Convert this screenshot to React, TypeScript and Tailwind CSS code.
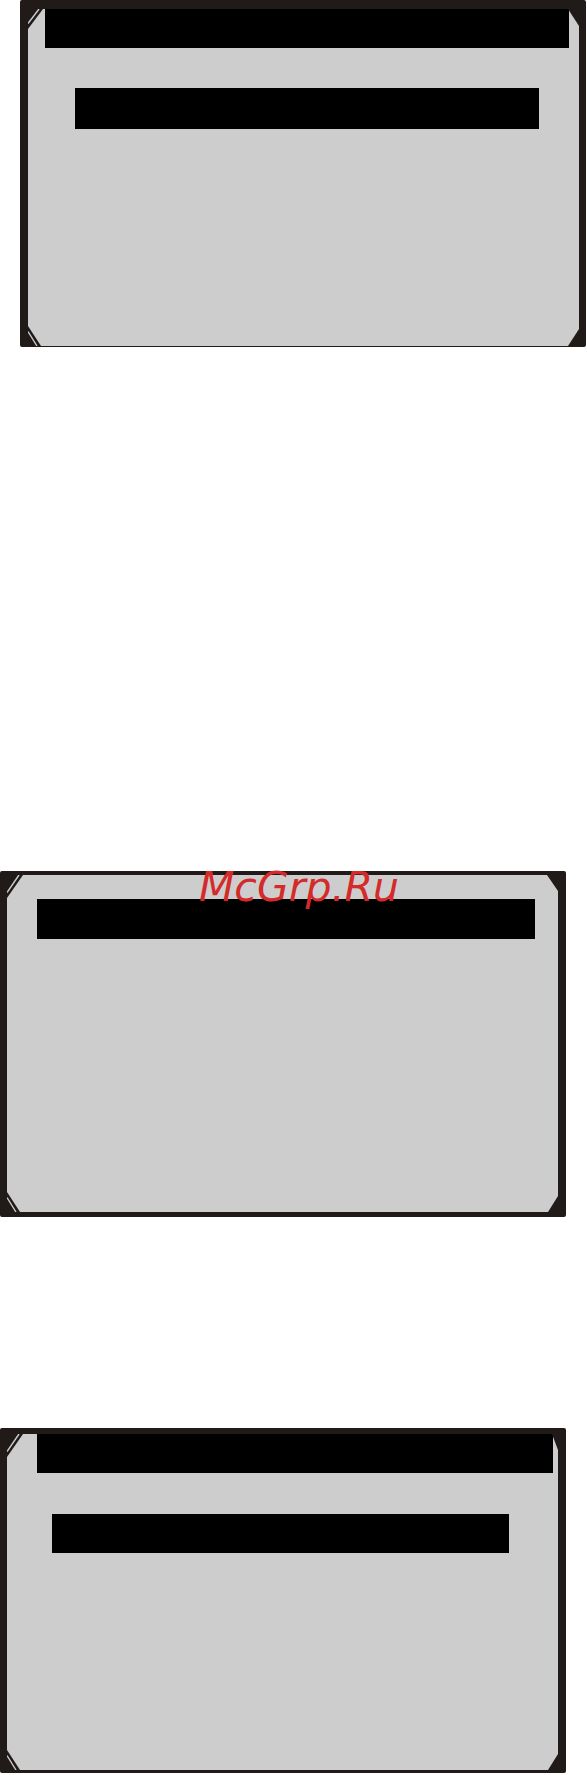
import React from "react";

// corner cut with a light bevel line, used on the left side of every screen
function BevelCorner({ w, h, flip }: { w: number; h: number; flip?: boolean }) {
  return (
    <svg
      width={w}
      height={h}
      viewBox={`0 0 ${w} ${h}`}
      className={`absolute left-0 ${flip ? "bottom-0" : "top-0"}`}
      style={flip ? { transform: "scaleY(-1)" } : undefined}
    >
      <polygon points={`0,0 ${w},0 0,${h}`} fill="#201b18" />
      <line x1={w - 4} y1={0} x2={0} y2={h - 5.5} stroke="#cdcdcd" strokeWidth={1.4} />
    </svg>
  );
}

function PlainCorner({ w, h, flip }: { w: number; h: number; flip?: boolean }) {
  return (
    <svg
      width={w}
      height={h}
      viewBox={`0 0 ${w} ${h}`}
      className={`absolute right-0 ${flip ? "bottom-0" : "top-0"}`}
      style={flip ? { transform: "scaleY(-1)" } : undefined}
    >
      <polygon points={`0,0 ${w},0 ${w},${h}`} fill="#201b18" />
    </svg>
  );
}

export default function App() {
  return (
    <div className="w-[587px] h-[1775px] bg-white overflow-hidden">
      {/* screen 1 */}
      <div className="ml-[20px] w-[566px] h-[347px] bg-[#201b18] rounded-[2px] pl-[8px] pr-[7px] pt-[5px] pb-[5px]">
        <div className="relative w-full h-full bg-[#cdcdcd]">
          <BevelCorner w={15} h={20} />
          <BevelCorner w={13} h={20} flip />
          <PlainCorner w={11} h={17} />
          <PlainCorner w={11} h={17} flip />
          <div className="ml-[17px] mt-[4px] w-[524px] h-[39px] bg-black" />
          <div className="ml-[47px] mt-[40px] w-[464px] h-[41px] bg-black" />
        </div>
      </div>

      {/* screen 2 */}
      <div className="relative mt-[524px] w-[566px] h-[346px] bg-[#201b18] rounded-[2px] pl-[7px] pr-[8px] pt-[4px] pb-[5px]">
        <div className="relative w-full h-full bg-[#cdcdcd] overflow-hidden">
          <BevelCorner w={16} h={23} />
          <BevelCorner w={13} h={20} flip />
          <PlainCorner w={11} h={16} />
          <PlainCorner w={10} h={16} flip />
          <div className="ml-[30px] mt-[24px] w-[498px] h-[40px] bg-black" />
        </div>
        <span className="absolute left-[199px] top-[-4px] text-[41px] leading-[41px] italic text-[#d52a2a] whitespace-nowrap font-['DejaVu_Sans',sans-serif]">
          McGrp.Ru
        </span>
      </div>

      {/* screen 3 */}
      <div className="mt-[211px] w-[566px] h-[345px] bg-[#201b18] rounded-[2px] pl-[7px] pr-[8px] pt-[4px] pb-[5px]">
        <div className="relative w-full h-full bg-[#cdcdcd]">
          <BevelCorner w={16} h={23} />
          <BevelCorner w={13} h={20} flip />
          <PlainCorner w={6} h={16} />
          <PlainCorner w={10} h={16} flip />
          <div className="ml-[30px] mt-[2px] w-[516px] h-[39px] bg-black" />
          <div className="ml-[45px] mt-[41px] w-[457px] h-[39px] bg-black" />
        </div>
      </div>
    </div>
  );
}
